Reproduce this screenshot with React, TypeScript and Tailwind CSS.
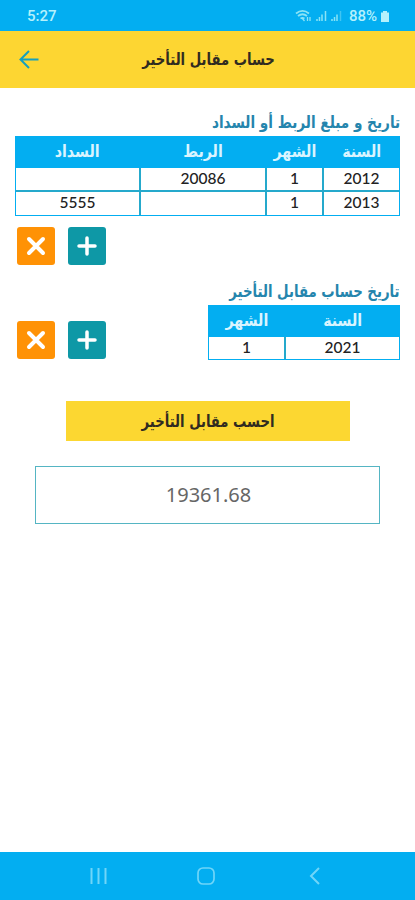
import type { ReactNode } from "react";

const rows = [
  { year: "2012", month: "1", due: "20086", paid: "" },
  { year: "2013", month: "1", due: "", paid: "5555" },
];

const arabic = "font-['DejaVu_Sans',sans-serif] whitespace-nowrap";

function HeaderCell({ children }: { children: ReactNode }) {
  return (
    <div className={`${arabic} flex h-full items-center justify-center pt-px text-[16.5px] font-bold text-[#d9f4ff]`}>
      <span className="inline-block scale-x-[0.86]">{children}</span>
    </div>
  );
}

function Cell({ children }: { children?: ReactNode }) {
  return (
    <div className="flex items-center justify-center bg-white pb-px text-[15.5px] font-medium text-[#222]">
      {children}
    </div>
  );
}

function RowButtons() {
  return (
    <div className="flex gap-[13px]">
      <button className="flex h-[38px] w-[38px] items-center justify-center rounded-[3px] bg-[#ff9205]">
        <svg width="22" height="22" viewBox="0 0 22 22" stroke="white" strokeWidth="4" strokeLinecap="round">
          <path d="M4 4l14 14M18 4l-14 14" />
        </svg>
      </button>
      <button className="flex h-[38px] w-[38px] items-center justify-center rounded-[3px] bg-[#0e98a6]">
        <svg width="22" height="22" viewBox="0 0 22 22" stroke="white" strokeWidth="3.5" strokeLinecap="round">
          <path d="M11 3v16M3 11h16" />
        </svg>
      </button>
    </div>
  );
}

export default function App() {
  return (
    <div className="flex h-[900px] w-[415px] flex-col overflow-hidden bg-white font-['Lato','DejaVu_Sans',sans-serif]">
      {/* Status bar */}
      <div className="flex h-[31px] items-center justify-between bg-[#03aef1] pt-px pr-[26px] pl-[27px] font-[Roboto,sans-serif] text-[15px] font-medium text-[#b5f1fc]">
        <span>5:27</span>
        <div className="flex items-center">
          <svg width="48" height="14" viewBox="0 0 48 14" fill="none" stroke="#8be3f5">
            <path d="M1 4.500c4-3.300 9-3.300 13 0M3 7c3-2.300 6-2.300 9 0M5.500 9.500q2-1.300 4 0" strokeWidth="1.800" />
            <path d="M7 9l2.500 3M12.500 8v4M15 8v4" strokeWidth="1.300" />
            <path d="M22 12v-2M24.500 12V8M27 12V5.500M30.500 12V2" strokeWidth="1.500" />
            <path d="M37 12v-2M39.500 12V8M42 12V5.500" strokeWidth="1.500" />
            <path d="M45.500 12V2" strokeWidth="1.500" opacity=".45" />
          </svg>
          <span className="ml-[6px]">88%</span>
          <svg className="ml-[4px]" width="8" height="11" viewBox="0 0 8 11" fill="#b5f1fc">
            <path d="M2 0h4v1.500H8V11H0V1.500h2z" />
          </svg>
        </div>
      </div>

      {/* App bar */}
      <header className="flex h-[57px] items-center bg-[#fdd632] pl-[19px]">
        <svg width="20" height="20" viewBox="0 0 20 20" fill="none" stroke="#16a0bd" strokeWidth="2">
          <path d="M19.500 9.500H1.500M10 1L1.500 9.500l8.500 8.500" />
        </svg>
        <h1 dir="rtl" className={`${arabic} ml-[102px] w-[134px] pt-[2px] text-[16.5px] font-bold text-[#302b20]`}>
          <span className="inline-block origin-right scale-x-[0.8]">حساب مقابل التأخير</span>
        </h1>
      </header>

      <main dir="rtl" className="flex flex-1 flex-col pr-[15px] pl-[15px]">
        <h2 className={`${arabic} mt-[22px] flex h-[26px] items-center text-[16.5px] font-bold text-[#2585ad]`}>
          <span className="inline-block origin-right scale-x-[0.825]">تاريخ و مبلغ الربط أو السداد</span>
        </h2>

        {/* Amounts table */}
        <div className="h-[80px] w-[385px] bg-[#03aef1] px-px">
          <div className="grid h-[32px] grid-cols-[75px_55px_124px_123px] gap-[2px]">
            <HeaderCell>السنة</HeaderCell>
            <HeaderCell>الشهر</HeaderCell>
            <HeaderCell>الربط</HeaderCell>
            <HeaderCell>السداد</HeaderCell>
          </div>
          <div className="grid grid-cols-[75px_55px_124px_123px] grid-rows-[22px_23px] gap-[2px] bg-[#25a9cc]">
            {rows.flatMap((row) => [
              <Cell key={`${row.year}-y`}>{row.year}</Cell>,
              <Cell key={`${row.year}-m`}>{row.month}</Cell>,
              <Cell key={`${row.year}-d`}>{row.due}</Cell>,
              <Cell key={`${row.year}-p`}>{row.paid}</Cell>,
            ])}
          </div>
        </div>
        <div dir="ltr" className="mt-[11px] pl-[2px]">
          <RowButtons />
        </div>

        <h2 className={`${arabic} mt-[13px] flex h-[27px] items-center pt-px text-[16.5px] font-bold text-[#2585ad]`}>
          <span className="inline-block origin-right scale-x-[0.805]">تاريخ حساب مقابل التأخير</span>
        </h2>

        {/* Calculation date */}
        <div className="flex h-[56px] justify-between">
          <div className="h-[55px] w-[192px] bg-[#03aef1] px-px">
            <div className="grid h-[32px] grid-cols-[113px_75px] gap-[2px]">
              <HeaderCell>السنة</HeaderCell>
              <HeaderCell>الشهر</HeaderCell>
            </div>
            <div className="grid grid-cols-[113px_75px] grid-rows-[22px] gap-[2px] bg-[#25a9cc]">
              <Cell>2021</Cell>
              <Cell>1</Cell>
            </div>
          </div>
          <div dir="ltr" className="mt-[16px] pl-[2px]">
            <RowButtons />
          </div>
        </div>

        <button className={`${arabic} mt-[40px] ml-[51px] flex h-[40px] w-[284px] items-center justify-center self-end bg-[#fcd731] pt-[2px] text-[16.5px] font-bold text-[#302b20]`}>
          <span className="inline-block scale-x-[0.8]">احسب مقابل التأخير</span>
        </button>
        <div className="mt-[25px] ml-[20px] flex h-[58px] w-[345px] items-center justify-center self-end border border-[#55b5c3] pl-[2px] font-['Noto_Sans',sans-serif] text-[20px] text-[#666]">
          19361.68
        </div>
      </main>

      {/* Navigation bar */}
      <nav className="flex h-[48px] items-center bg-[#03aef1] pl-[90px] text-[#70d5f8]">
        <svg width="17" height="18" viewBox="0 0 17 18" stroke="currentColor" strokeWidth="2">
          <path d="M1.500 1v16M8.500 1v16M15.500 1v16" />
        </svg>
        <svg className="ml-[90px]" width="18" height="18" viewBox="0 0 18 18" fill="none" stroke="currentColor" strokeWidth="1.700">
          <rect x="1" y="1" width="16" height="16" rx="5" />
        </svg>
        <svg className="ml-[94px]" width="11" height="18" viewBox="0 0 11 18" fill="none" stroke="currentColor" strokeWidth="2">
          <path d="M10 1L2 9l8 8" />
        </svg>
      </nav>
    </div>
  );
}
